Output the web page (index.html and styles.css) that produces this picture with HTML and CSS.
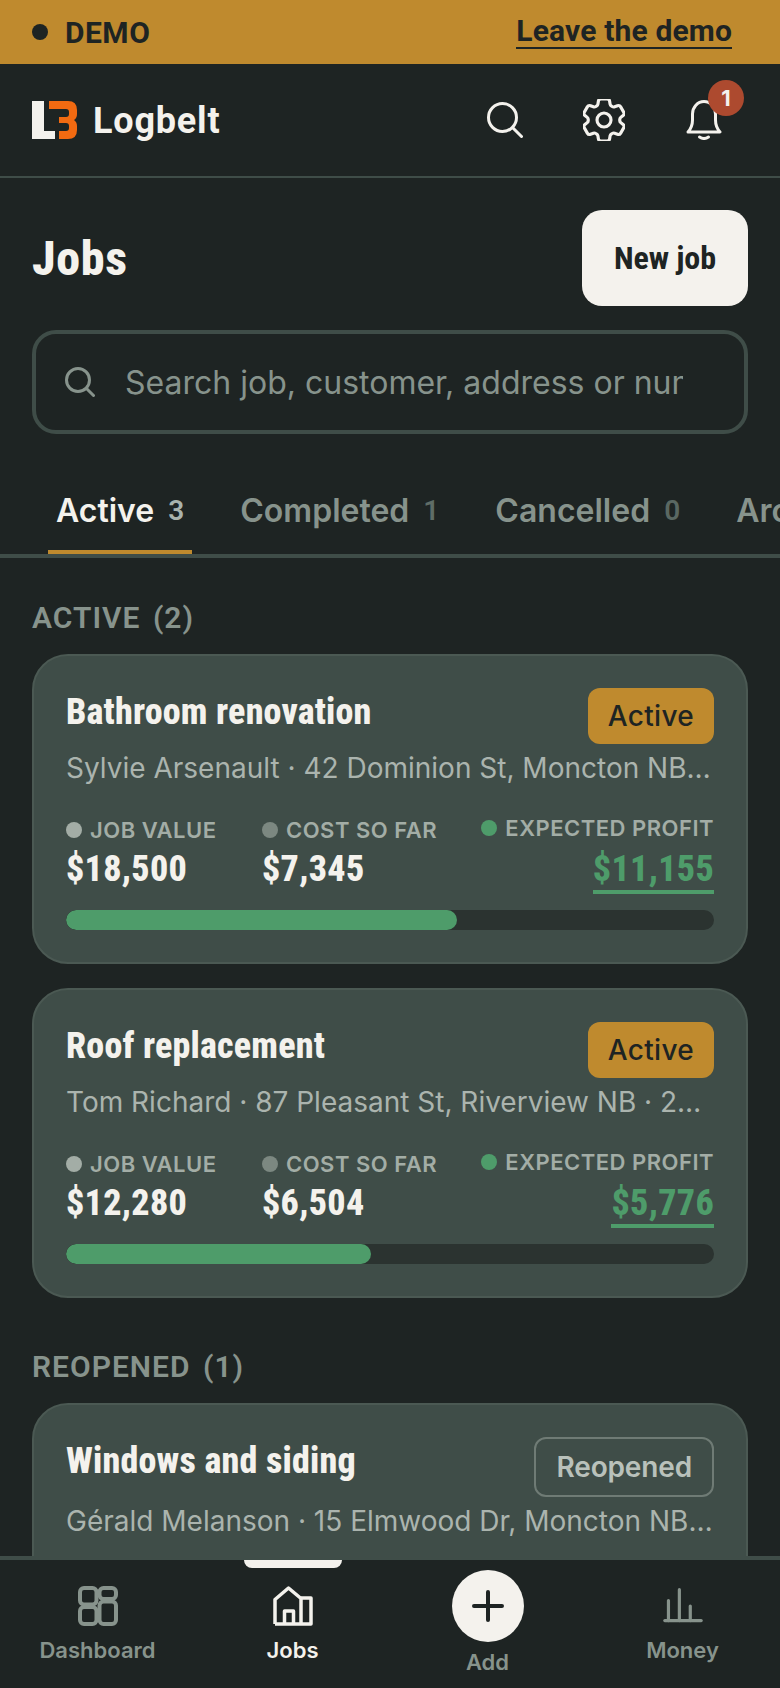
FILE: index.html
```html
<!DOCTYPE html>
<html lang="en">
<head>
    <meta charset="UTF-8">
    <meta name="viewport" content="width=device-width, initial-scale=1.0">
    <title>Logbelt - Jobs</title>
    <link rel="stylesheet" href="styles.css">
</head>
<body>
    <div class="app">
        <div class="demo-bar">
            <div class="demo-tag"><span class="demo-dot"></span>DEMO</div>
            <a class="demo-leave" href="#">Leave the demo</a>
        </div>

        <header class="topbar">
            <div class="brand">
                <svg class="brand-mark" viewBox="0 0 46 38">
                    <path fill="#f4f2ed" d="M0 0H12V30H23V38H0Z"/>
                    <path fill="#f26a11" d="M17 0H36Q45 0 45 9V13Q45 17 42 19Q45 21 45 25V29Q45 38 36 38H27V30H34Q37 30 37 27V25Q37 22 34 22H27V16H34Q37 16 37 13V11Q37 8 34 8H17Z"/>
                </svg>
                <span class="brand-name">Logbelt</span>
            </div>
            <div class="top-icons">
                <svg class="ic-search" viewBox="0 0 36 36" fill="none" stroke="#f4f2ed" stroke-width="3" stroke-linecap="round">
                    <circle cx="15.5" cy="15.5" r="14"/>
                    <path d="M26 26L34.5 34.5"/>
                </svg>
                <svg class="ic-gear" viewBox="3 3 18 18" fill="none" stroke="#f4f2ed" stroke-width="1.35" stroke-linejoin="round">
                    <path d="M9.594 3.94c.09-.542.56-.94 1.11-.94h2.593c.55 0 1.02.398 1.11.94l.213 1.281c.063.374.313.686.645.87.074.04.147.083.22.127.325.196.72.257 1.075.124l1.217-.456a1.125 1.125 0 0 1 1.37.49l1.296 2.247a1.125 1.125 0 0 1-.26 1.431l-1.003.827c-.293.241-.438.613-.43.992a7.723 7.723 0 0 1 0 .255c-.008.378.137.75.43.991l1.004.827c.424.35.534.955.26 1.43l-1.298 2.247a1.125 1.125 0 0 1-1.369.491l-1.217-.456c-.355-.133-.75-.072-1.076.124a6.47 6.47 0 0 1-.22.128c-.331.183-.581.495-.644.869l-.213 1.281c-.09.543-.56.94-1.11.94h-2.594c-.55 0-1.019-.398-1.11-.94l-.213-1.281c-.062-.374-.312-.686-.644-.87a6.52 6.52 0 0 1-.22-.127c-.325-.196-.72-.257-1.076-.124l-1.217.456a1.125 1.125 0 0 1-1.369-.49l-1.297-2.247a1.125 1.125 0 0 1 .26-1.431l1.004-.827c.292-.24.437-.613.43-.991a6.932 6.932 0 0 1 0-.255c.007-.38-.138-.751-.43-.992l-1.004-.827a1.125 1.125 0 0 1-.26-1.43l1.297-2.247a1.125 1.125 0 0 1 1.37-.491l1.216.456c.356.133.751.072 1.076-.124.072-.044.146-.086.22-.128.332-.183.582-.495.644-.869l.214-1.28Z"/>
                    <path d="M15 12a3 3 0 1 1-6 0 3 3 0 0 1 6 0Z"/>
                </svg>
                <div class="bell">
                    <svg class="ic-bell" viewBox="0 0 36 40" fill="none" stroke="#f4f2ed" stroke-width="3" stroke-linecap="round" stroke-linejoin="round">
                        <path d="M2 32Q6.500 27 6.500 20V14A11.500 12.500 0 0 1 29.500 14V20Q29.500 27 34 32Z"/>
                        <path d="M13.500 37Q18 40 22.500 37"/>
                    </svg>
                    <span class="bell-badge">1</span>
                </div>
            </div>
        </header>

        <div class="page-head">
            <h1>Jobs</h1>
            <button class="btn-new">New job</button>
        </div>

        <div class="search">
            <svg class="search-ic" viewBox="0 0 30 30" fill="none" stroke="#87938c" stroke-width="3" stroke-linecap="round">
                <circle cx="13" cy="13" r="11.500"/>
                <path d="M21.500 21.500L28.500 28.500"/>
            </svg>
            <input class="search-input" type="text" placeholder="Search job, customer, address or number">
        </div>

        <nav class="tabs">
            <div class="tab on">Active <span class="tab-num">3</span></div>
            <div class="tab">Completed <span class="tab-num">1</span></div>
            <div class="tab">Cancelled <span class="tab-num zero">0</span></div>
            <div class="tab">Archived <span class="tab-num">0</span></div>
        </nav>

        <main class="jobs">
            <h3 class="group">ACTIVE <span>(2)</span></h3>

            <article class="card">
                <div class="card-top">
                    <h2>Bathroom renovation</h2>
                    <span class="badge">Active</span>
                </div>
                <p class="card-sub">Sylvie Arsenault · 42 Dominion St, Moncton NB · 2 days ago</p>
                <div class="metrics">
                    <div class="metric first">
                        <div class="metric-label"><i class="dot light"></i>JOB VALUE</div>
                        <div class="metric-val">$18,500</div>
                    </div>
                    <div class="metric">
                        <div class="metric-label"><i class="dot mid"></i>COST SO FAR</div>
                        <div class="metric-val">$7,345</div>
                    </div>
                    <div class="metric profit">
                        <div class="metric-label"><i class="dot good"></i>EXPECTED PROFIT</div>
                        <div class="metric-val">$11,155</div>
                    </div>
                </div>
                <div class="bar"><div class="bar-fill" style="width: 60.3%"></div></div>
            </article>

            <article class="card">
                <div class="card-top">
                    <h2>Roof replacement</h2>
                    <span class="badge">Active</span>
                </div>
                <p class="card-sub">Tom Richard · 87 Pleasant St, Riverview NB · 28 days ago</p>
                <div class="metrics">
                    <div class="metric first">
                        <div class="metric-label"><i class="dot light"></i>JOB VALUE</div>
                        <div class="metric-val">$12,280</div>
                    </div>
                    <div class="metric">
                        <div class="metric-label"><i class="dot mid"></i>COST SO FAR</div>
                        <div class="metric-val">$6,504</div>
                    </div>
                    <div class="metric profit">
                        <div class="metric-label"><i class="dot good"></i>EXPECTED PROFIT</div>
                        <div class="metric-val">$5,776</div>
                    </div>
                </div>
                <div class="bar"><div class="bar-fill" style="width: 47%"></div></div>
            </article>

            <h3 class="group second">REOPENED <span>(1)</span></h3>

            <article class="card">
                <div class="card-top">
                    <h2>Windows and siding</h2>
                    <span class="badge outline">Reopened</span>
                </div>
                <p class="card-sub">Gérald Melanson · 15 Elmwood Dr, Moncton NB · 5 days ago</p>
                <div class="metrics">
                    <div class="metric first">
                        <div class="metric-label"><i class="dot light"></i>JOB VALUE</div>
                    </div>
                </div>
                <div class="bar"><div class="bar-fill" style="width: 50%"></div></div>
            </article>
        </main>

        <nav class="bottom-nav">
            <span class="nav-mark"></span>
            <a class="nav-item" href="#">
                <svg class="nav-ic" viewBox="0 0 40 40" fill="none" stroke="#87938c" stroke-width="4">
                    <rect x="2" y="2" width="16.500" height="16.500" rx="4"/>
                    <rect x="21.500" y="2" width="16.500" height="11" rx="4"/>
                    <rect x="2" y="21" width="16.500" height="17" rx="4"/>
                    <rect x="21.500" y="15.500" width="16.500" height="22.500" rx="4"/>
                </svg>
                <span>Dashboard</span>
            </a>
            <a class="nav-item on" href="#">
                <svg class="nav-ic" viewBox="0 0 40 40" fill="none" stroke="#f4f2ed" stroke-width="3.500" stroke-linejoin="round">
                    <path d="M2 38V13.500L15.500 2L28 12.500V38"/>
                    <path d="M28 12H38V38H2"/>
                    <path d="M11.500 38V25H20.500V38"/>
                </svg>
                <span>Jobs</span>
            </a>
            <a class="nav-item add" href="#">
                <span class="add-circle">
                    <svg class="add-ic" viewBox="0 0 32 32" fill="none" stroke="#1e2423" stroke-width="4" stroke-linecap="round">
                        <path d="M16 2V30M2 16H30"/>
                    </svg>
                </span>
                <span>Add</span>
            </a>
            <a class="nav-item" href="#">
                <svg class="nav-ic" viewBox="0 0 44 40" fill="none" stroke="#87938c" stroke-width="3.500" stroke-linecap="round">
                    <path d="M2 36H42"/>
                    <path d="M6 36V14M18 36V2M30 36V20"/>
                </svg>
                <span>Money</span>
            </a>
        </nav>
    </div>
</body>
</html>
```

FILE: styles.css
```css
* {
    margin: 0;
    padding: 0;
    box-sizing: border-box;
}
body {
    font-family: 'Inter', sans-serif;
    background: #1e2423;
    color: #f4f2ed;
}
a {
    color: inherit;
    text-decoration: none;
}
.app {
    width: 780px;
    height: 1688px;
    display: flex;
    flex-direction: column;
    overflow: hidden;
}

/* headings use a condensed look */
.demo-tag, .demo-leave, .brand-name, h1, h2, h3, .btn-new, .metric-val, .tab-num {
    font-family: 'Roboto', sans-serif;
    font-stretch: 75%;
}

.demo-bar {
    flex: none;
    height: 64px;
    padding: 0 48px 0 32px;
    background: #bf8a2e;
    color: #1e2423;
    display: flex;
    align-items: center;
    justify-content: space-between;
    font-size: 30px;
    font-weight: 700;
}
.demo-tag {
    display: flex;
    align-items: center;
    gap: 17px;
    font-stretch: 100%;
    letter-spacing: 0.5px;
}
.demo-dot {
    width: 16px;
    height: 16px;
    border-radius: 50%;
    background: #1e2423;
}
.demo-leave {
    border-bottom: 2px solid #1e2423;
    line-height: 32px;
    font-stretch: 100%;
    letter-spacing: 0.15px;
}

.topbar {
    flex: none;
    height: 114px;
    padding: 0 32px;
    border-bottom: 2px solid #3f4d48;
    display: flex;
    align-items: center;
    justify-content: space-between;
}
.brand {
    display: flex;
    align-items: center;
    gap: 15px;
}
.brand-mark {
    width: 46px;
    height: 38px;
}
.brand-name {
    font-size: 36px;
    font-weight: 700;
    font-stretch: 100%;
    letter-spacing: 0.8px;
    padding-top: 2px;
}
.top-icons {
    display: flex;
    align-items: center;
    margin-right: 26px;
}
.ic-search {
    width: 36px;
    height: 36px;
    margin-right: 60px;
}
.ic-gear {
    width: 42px;
    height: 42px;
    margin-right: 61px;
}
.bell {
    position: relative;
    width: 36px;
    height: 40px;
}
.ic-bell {
    width: 36px;
    height: 40px;
}
.bell-badge {
    position: absolute;
    top: -20px;
    left: 22px;
    width: 36px;
    height: 36px;
    border-radius: 50%;
    background: #ad4a2f;
    color: #f4f2ed;
    font-size: 22px;
    font-weight: 700;
    line-height: 36px;
    text-align: center;
}

.page-head {
    flex: none;
    padding: 32px 32px 0;
    display: flex;
    align-items: center;
    justify-content: space-between;
}
h1 {
    font-size: 48px;
    font-weight: 800;
    letter-spacing: 0.7px;
}
.btn-new {
    width: 166px;
    height: 96px;
    border: none;
    border-radius: 20px;
    background: #f4f2ed;
    color: #1e2423;
    font-size: 32px;
    font-weight: 700;
}

.search {
    flex: none;
    height: 104px;
    margin: 24px 32px 0;
    padding: 0 61px 0 29px;
    border: 4px solid #3f4d48;
    border-radius: 24px;
    display: flex;
    align-items: center;
    gap: 30px;
}
.search-ic {
    flex: none;
    width: 30px;
    height: 30px;
}
.search-input {
    flex: 1;
    min-width: 0;
    border: none;
    outline: none;
    background: none;
    font-family: 'Inter', sans-serif;
    font-size: 32px;
    color: #f4f2ed;
}
.search-input::placeholder {
    color: #87938c;
    opacity: 1;
}

.tabs {
    flex: none;
    height: 100px;
    margin-top: 24px;
    padding: 0 0 0 48px;
    border-bottom: 4px solid #3f4d48;
    display: flex;
    gap: 40px;
    overflow: hidden;
}
.tab {
    flex: none;
    height: 96px;
    padding: 33px 8px 0;
    border-bottom: 4px solid transparent;
    border-radius: 4px 4px 0 0;
    font-size: 32px;
    font-weight: 600;
    line-height: 40px;
    color: #87938c;
}
.tab.on {
    color: #f4f2ed;
    border-bottom-color: #bf8a2e;
}
.tab-num {
    margin-left: 6px;
    font-size: 28px;
    font-weight: 600;
    font-stretch: 100%;
    color: #5f6d67;
    vertical-align: 2px;
}
.tab.on .tab-num {
    color: #a9b3ad;
}
.tab-num.zero {
    color: #5a6862;
}

.jobs {
    flex: 1;
    min-height: 0;
    overflow: hidden;
    padding: 42px 32px 0;
}
.group {
    font-size: 30px;
    font-weight: 600;
    font-stretch: 100%;
    letter-spacing: 1px;
    line-height: 36px;
    color: #87938c;
    margin-bottom: 18px;
}
.group span {
    margin-left: 4px;
}
.group.second {
    margin-top: 51px;
}

.card {
    margin-bottom: 24px;
    padding: 32px;
    border: 2px solid #4b5953;
    border-radius: 36px;
    background: #3f4d48;
}
.card-top {
    display: flex;
    align-items: flex-start;
    justify-content: space-between;
}
h2 {
    padding-top: 2px;
    font-size: 36px;
    font-weight: 800;
    letter-spacing: 0.2px;
    line-height: 44px;
}
.badge {
    flex: none;
    height: 56px;
    padding: 0 20px;
    border-radius: 12px;
    background: #bf8a2e;
    color: #1e2423;
    font-size: 28px;
    font-weight: 500;
    letter-spacing: 0.3px;
    line-height: 56px;
}
.badge.outline {
    height: 60px;
    background: none;
    border: 2px solid #6f7b75;
    color: #b9c1bb;
    font-weight: 600;
    letter-spacing: -0.15px;
    line-height: 56px;
}
.card-sub {
    margin-top: 4px;
    font-size: 28px;
    line-height: 40px;
    color: #abb4ae;
    white-space: nowrap;
    overflow: hidden;
    text-overflow: ellipsis;
}
.metrics {
    margin-top: 28px;
    display: flex;
}
.metric.first {
    width: 196px;
}
.metric-label {
    display: flex;
    align-items: center;
    gap: 8px;
    font-size: 22px;
    font-weight: 600;
    letter-spacing: 0.5px;
    line-height: 28px;
    color: #a3ada6;
}
.dot {
    width: 16px;
    height: 16px;
    border-radius: 50%;
}
.dot.light {
    background: #a3ada6;
}
.dot.mid {
    background: #7c8881;
}
.dot.good {
    background: #4e9c6a;
}
.metric-val {
    margin-top: 4px;
    font-size: 36px;
    font-weight: 800;
    letter-spacing: 0.3px;
    line-height: 42px;
}
.metric.profit {
    margin-left: auto;
    display: flex;
    flex-direction: column;
    align-items: flex-end;
}
.profit .metric-label {
    margin-top: -2px;
    margin-bottom: 2px;
}
.profit .metric-val {
    color: #4e9c6a;
    border-bottom: 4px solid #4e9c6a;
}
.bar {
    height: 20px;
    margin-top: 16px;
    border-radius: 10px;
    background: #2b3330;
    overflow: hidden;
}
.bar-fill {
    height: 100%;
    border-radius: 10px;
    background: #4e9c6a;
}

.bottom-nav {
    flex: none;
    position: relative;
    height: 132px;
    border-top: 4px solid #3f4d48;
    background: #1e2423;
    display: grid;
    grid-template-columns: repeat(4, 1fr);
}
.nav-mark {
    position: absolute;
    top: 0;
    left: 244px;
    width: 98px;
    height: 8px;
    border-radius: 0 0 8px 8px;
    background: #f4f2ed;
}
.nav-item {
    padding-top: 26px;
    display: flex;
    flex-direction: column;
    align-items: center;
    gap: 10px;
    font-size: 22px;
    font-weight: 600;
    line-height: 28px;
    color: #87938c;
}
.nav-item.on {
    color: #f4f2ed;
}
.nav-item.add {
    padding-top: 10px;
    gap: 6px;
}
.nav-ic {
    width: 40px;
    height: 40px;
}
.add-circle {
    width: 72px;
    height: 72px;
    border-radius: 50%;
    background: #f4f2ed;
    display: flex;
    align-items: center;
    justify-content: center;
}
.add-ic {
    width: 32px;
    height: 32px;
}
```
